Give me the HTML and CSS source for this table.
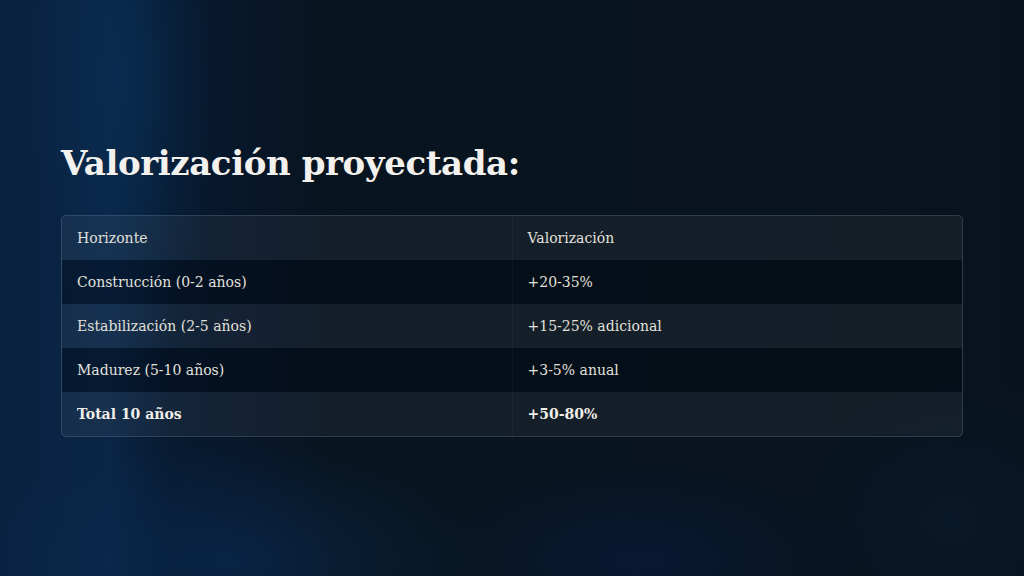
FILE: index.html
```html
<!DOCTYPE html>
<html lang="es">
<head>
<meta charset="utf-8">
<link rel="stylesheet" href="styles.css">
</head>
<body>
<main class="slide">
  <h1 class="title">Valorización proyectada:</h1>
  <div class="table-wrap">
    <table class="data">
      <thead>
        <tr><th>Horizonte</th><th>Valorización</th></tr>
      </thead>
      <tbody>
        <tr><td>Construcción (0-2 años)</td><td>+20-35%</td></tr>
        <tr><td>Estabilización (2-5 años)</td><td>+15-25% adicional</td></tr>
        <tr><td>Madurez (5-10 años)</td><td>+3-5% anual</td></tr>
        <tr class="total"><td>Total 10 años</td><td>+50-80%</td></tr>
      </tbody>
    </table>
  </div>
</main>
</body>
</html>
```
FILE: styles.css
```css
html, body {
  margin: 0;
  padding: 0;
}
body {
  width: 1024px;
  height: 576px;
  overflow: hidden;
  font-family: "DejaVu Serif", "Liberation Serif", serif;
  color: #e8e6e3;
  background:
    radial-gradient(ellipse 90px 300px at 125px 80px, rgba(10, 50, 90, 0.55), transparent),
    radial-gradient(ellipse 260px 120px at 230px 560px, rgba(10, 45, 85, 0.6), transparent),
    radial-gradient(ellipse 220px 100px at 640px 560px, rgba(8, 30, 70, 0.5), transparent),
    radial-gradient(ellipse 160px 140px at 950px 520px, rgba(10, 30, 55, 0.4), transparent),
    linear-gradient(90deg, #0a2240 0px, #0a2545 110px, #071a30 170px, #081628 260px, #08141f 330px, #08131d 1024px);
}
.slide {
  padding: 137px 61px 0 61px;
  display: flex;
  flex-direction: column;
  gap: 25px;
}
.title {
  margin: 0;
  font-size: 34px;
  font-weight: 700;
  line-height: 53px;
  color: #f3f1ee;
  letter-spacing: -0.4px;
}
.table-wrap {
  border: 1px solid rgba(150, 170, 190, 0.28);
  border-radius: 5px;
  overflow: hidden;
}
.data {
  width: 100%;
  border-collapse: collapse;
  font-size: 14px;
}
.data th, .data td {
  text-align: left;
  height: 44px;
  padding: 0 15px;
  font-weight: 400;
  color: #e2e0dc;
  width: 50%;
}
.data th + th, .data td + td {
  border-left: 1px solid rgba(255, 255, 255, 0.03);
}
.data thead tr {
  background: rgba(255, 255, 255, 0.05);
}
.data tbody tr:nth-child(odd) {
  background: rgba(0, 5, 15, 0.35);
}
.data tbody tr:nth-child(even) {
  background: rgba(255, 255, 255, 0.05);
}
.data tr.total td {
  font-weight: 700;
  color: #f0eee9;
}
```
